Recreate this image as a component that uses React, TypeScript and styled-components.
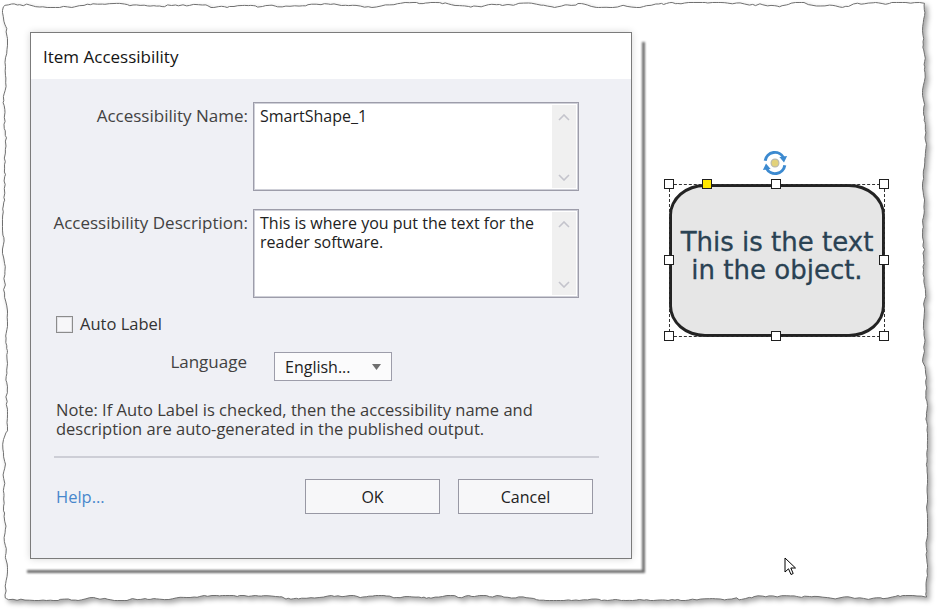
import React from 'react';
import styled, { createGlobalStyle } from 'styled-components';

const Global = createGlobalStyle`
  html, body { margin: 0; padding: 0; background: #ffffff; }
  body { width: 940px; height: 614px; overflow: hidden; font-family: "Open Sans", "Noto Sans", sans-serif; }
`;

const Page = styled.div`
  position: relative;
  width: 940px;
  height: 614px;
  background: #ffffff;
  overflow: hidden;
`;

const FrameSvg = styled.svg`
  position: absolute;
  left: 0;
  top: 0;
  width: 940px;
  height: 614px;
  z-index: 0;
  filter: drop-shadow(3px 3px 2.5px rgba(0, 0, 0, 0.35));
`;

const Content = styled.div`
  position: relative;
  z-index: 1;
  display: flex;
  align-items: flex-start;
  padding: 32px 0 0 30px;
`;

const Dialog = styled.div`
  position: relative;
  box-sizing: border-box;
  width: 602px;
  height: 527px;
  border: 1px solid #7b7b7b;
  background: #eff0f5;
  display: flex;
  flex-direction: column;
  box-shadow: 0 0 7px rgba(0, 0, 0, 0.16);
  &::after {
    content: '';
    position: absolute;
    left: -4px;
    top: 9px;
    right: -14px;
    bottom: -15px;
    border-right: 3px solid rgba(85, 85, 85, 0.85);
    border-bottom: 3px solid rgba(85, 85, 85, 0.85);
    filter: blur(1px);
    z-index: -1;
  }
`;

const TitleBar = styled.div`
  height: 46px;
  background: #ffffff;
  display: flex;
  align-items: center;
  padding-left: 12px;
  font-size: 17px;
  color: #141414;
`;

const Body = styled.div`
  display: flex;
  flex-direction: column;
  padding: 23px 0 0 0;
`;

const FieldRow = styled.div<{ $mt?: number }>`
  display: grid;
  grid-template-columns: 217px 326px;
  column-gap: 5px;
  margin-top: ${(p) => p.$mt ?? 0}px;
`;

const FieldLabel = styled.div`
  text-align: right;
  padding-top: 3px;
  font-size: 17px;
  line-height: 22px;
  color: #424242;
  white-space: nowrap;
`;

const TextBox = styled.div`
  box-sizing: border-box;
  height: 89px;
  border: 1px solid #9d9daa;
  box-shadow: inset 0 0 0 1px #cfd0d8;
  background: #ffffff;
  display: flex;
`;

const TextContent = styled.div`
  flex: 1;
  padding: 4px 6px;
  font-size: 16px;
  line-height: 19px;
  color: #222222;
`;

const ScrollTrack = styled.div`
  width: 24px;
  margin: 2px 2px 2px 0;
  background: #f0f0f0;
  display: flex;
  flex-direction: column;
  justify-content: space-between;
  align-items: center;
  padding: 9px 0 7px;
`;

const CheckRow = styled.label`
  display: flex;
  align-items: center;
  gap: 7px;
  margin-top: 16px;
  padding-left: 25px;
  font-size: 16.5px;
  line-height: 20px;
  color: #333333;
`;

const CheckBox = styled.span`
  box-sizing: border-box;
  width: 17px;
  height: 17px;
  border: 1px solid #8c8c8c;
  box-shadow: inset 0 0 0 1px #e2e2e6;
  background: #f7f7f9;
`;

const LangRow = styled.div`
  display: grid;
  grid-template-columns: 216px 118px;
  column-gap: 27px;
  margin-top: 18px;
  align-items: start;
`;

const LangLabel = styled.div`
  text-align: right;
  font-size: 17px;
  line-height: 20px;
  color: #424242;
`;

const Select = styled.div`
  box-sizing: border-box;
  height: 29px;
  border: 1px solid #9d9daa;
  background: #fbfbfc;
  display: flex;
  align-items: center;
  justify-content: space-between;
  padding: 0 10px 0 10px;
  font-size: 16px;
  color: #222222;
`;

const Note = styled.div`
  margin-top: 19px;
  padding-left: 25px;
  font-size: 16.5px;
  line-height: 19px;
  color: #3e3c3a;
  white-space: nowrap;
`;

const Separator = styled.div`
  margin: 18px 0 0 23px;
  width: 545px;
  height: 2px;
  background: #cdced6;
`;

const ButtonRow = styled.div`
  display: flex;
  align-items: center;
  margin-top: 21px;
  padding: 0 38px 0 25px;
`;

const HelpLink = styled.a`
  flex: 1;
  font-size: 16.5px;
  color: #4787cc;
  text-decoration: none;
`;

const Button = styled.button<{ $ml?: number }>`
  box-sizing: border-box;
  width: 135px;
  height: 35px;
  margin-left: ${(p) => p.$ml ?? 0}px;
  border: 1px solid #9898a4;
  background: #f7f7f9;
  font-family: "Open Sans", "Noto Sans", sans-serif;
  font-size: 16px;
  color: #222222;
  padding: 0;
`;

const Stage = styled.div`
  position: relative;
  margin: 152px 0 0 37px;
`;

const Shape = styled.div`
  position: relative;
  box-sizing: border-box;
  width: 216px;
  height: 153px;
  border: 3px solid #232323;
  border-radius: 36px / 31px;
  background: #e6e6e6;
  display: flex;
  align-items: center;
  justify-content: center;
  text-align: center;
  padding-bottom: 9px;
  font-family: "DejaVu Sans", Verdana, sans-serif;
  font-size: 26px;
  line-height: 28px;
  color: #2a4253;
  -webkit-text-stroke: 0.3px #2a4253;
`;

const SelectionBox = styled.div`
  position: absolute;
  left: 0;
  top: 0;
  width: 216px;
  height: 153px;
  box-sizing: border-box;
  border: 1px dashed #333333;
  pointer-events: none;
`;

const Handle = styled.span<{ $x: number; $y: number; $yellow?: boolean }>`
  position: absolute;
  left: ${(p) => p.$x - 5}px;
  top: ${(p) => p.$y - 5}px;
  width: 10px;
  height: 10px;
  box-sizing: border-box;
  border: 1px solid #1f1f1f;
  background: ${(p) => (p.$yellow ? '#ffe800' : '#ffffff')};
`;

const RotateIcon = styled.svg`
  position: absolute;
  left: 91px;
  top: -35px;
`;

const Cursor = styled.svg`
  position: absolute;
  left: 784px;
  top: 557px;
  z-index: 2;
`;

function mulberry32(a: number) {
  return function () {
    a |= 0;
    a = (a + 0x6d2b79f5) | 0;
    let t = Math.imul(a ^ (a >>> 15), 1 | a);
    t = (t + Math.imul(t ^ (t >>> 7), 61 | t)) ^ t;
    return ((t ^ (t >>> 14)) >>> 0) / 4294967296;
  };
}

function tornPath(): string {
  const rnd = mulberry32(1234567);
  const pts: [number, number][] = [];
  const L = 5, T = 5, R = 925, B = 598;
  let j = 0;
  const walk = (amp: number) => {
    j += (rnd() - 0.5) * 2.4;
    if (rnd() < 0.08) j += (rnd() - 0.5) * 4;
    if (j > amp) j = amp;
    if (j < -amp) j = -amp;
    return j;
  };
  for (let x = L; x < R; x += 2 + rnd() * 3) pts.push([x, T + walk(2.5)]);
  j = 0;
  for (let y = T; y < B; y += 2 + rnd() * 3) pts.push([R + walk(2.5), y]);
  j = 0;
  for (let x = R; x > L; x -= 2 + rnd() * 3) pts.push([x, B + walk(2.5)]);
  j = 0;
  for (let y = B; y > T; y -= 2 + rnd() * 3) pts.push([L + walk(2.5), y]);
  return 'M' + pts.map(([x, y]) => `${x.toFixed(1)},${y.toFixed(1)}`).join(' L') + ' Z';
}

const Chevron: React.FC<{ up?: boolean }> = ({ up }) => (
  <svg width="12" height="7" viewBox="0 0 12 7">
    <path
      d={up ? 'M1 6 L6 1 L11 6' : 'M1 1 L6 6 L11 1'}
      fill="none"
      stroke="#c4c4cc"
      strokeWidth="1.6"
    />
  </svg>
);

const handles: { x: number; y: number; yellow?: boolean }[] = [
  { x: 0, y: 0 },
  { x: 38, y: 0, yellow: true },
  { x: 107, y: 0 },
  { x: 215, y: 0 },
  { x: 0, y: 76 },
  { x: 215, y: 76 },
  { x: 0, y: 152 },
  { x: 107, y: 152 },
  { x: 215, y: 152 },
];

export default function App() {
  const path = React.useMemo(() => tornPath(), []);
  return (
    <Page>
      <Global />
      <FrameSvg viewBox="0 0 940 614">
        <path d={path} fill="#ffffff" stroke="#707070" strokeWidth="1" />
      </FrameSvg>
      <Content>
        <Dialog>
          <TitleBar>Item Accessibility</TitleBar>
          <Body>
            <FieldRow>
              <FieldLabel>Accessibility Name:</FieldLabel>
              <TextBox>
                <TextContent>SmartShape_1</TextContent>
                <ScrollTrack>
                  <Chevron up />
                  <Chevron />
                </ScrollTrack>
              </TextBox>
            </FieldRow>
            <FieldRow $mt={18}>
              <FieldLabel>Accessibility Description:</FieldLabel>
              <TextBox>
                <TextContent>
                  This is where you put the text for the
                  <br />
                  reader software.
                </TextContent>
                <ScrollTrack>
                  <Chevron up />
                  <Chevron />
                </ScrollTrack>
              </TextBox>
            </FieldRow>
            <CheckRow>
              <CheckBox />
              Auto Label
            </CheckRow>
            <LangRow>
              <LangLabel>Language</LangLabel>
              <Select>
                <span>English...</span>
                <svg width="9" height="6" viewBox="0 0 9 6">
                  <path d="M0 0 L9 0 L4.5 6 Z" fill="#6f6f6f" />
                </svg>
              </Select>
            </LangRow>
            <Note>
              Note: If Auto Label is checked, then the accessibility name and
              <br />
              description are auto-generated in the published output.
            </Note>
            <Separator />
            <ButtonRow>
              <HelpLink href="#">Help...</HelpLink>
              <Button>OK</Button>
              <Button $ml={18}>Cancel</Button>
            </ButtonRow>
          </Body>
        </Dialog>
        <Stage>
          <RotateIcon width="30" height="28" viewBox="0 0 26 24">
            <path d="M4.5 10 A8.5 8.5 0 0 1 20.5 7.5" fill="none" stroke="#3c8ad0" strokeWidth="2.6" />
            <path d="M23.5 6 L20.8 11.5 L16.8 6.8 Z" fill="#3c8ad0" />
            <path d="M21.5 14 A8.5 8.5 0 0 1 5.5 16.5" fill="none" stroke="#3c8ad0" strokeWidth="2.6" />
            <path d="M2.5 18 L5.2 12.5 L9.2 17.2 Z" fill="#3c8ad0" />
            <circle cx="13" cy="12" r="3.4" fill="#e3d27a" stroke="#b8b8b0" strokeWidth="1" />
          </RotateIcon>
          <Shape>
            This is the text
            <br />
            in the object.
          </Shape>
          <SelectionBox />
          {handles.map((h, i) => (
            <Handle key={i} $x={h.x} $y={h.y} $yellow={h.yellow} />
          ))}
        </Stage>
      </Content>
      <Cursor width="13" height="20" viewBox="0 0 13 20">
        <path
          d="M1 1 L1 15 L4.5 11.8 L7 17.5 L9.2 16.5 L6.8 11 L11.5 11 Z"
          fill="#ffffff"
          stroke="#000000"
          strokeWidth="1"
          strokeLinejoin="miter"
        />
      </Cursor>
    </Page>
  );
}
